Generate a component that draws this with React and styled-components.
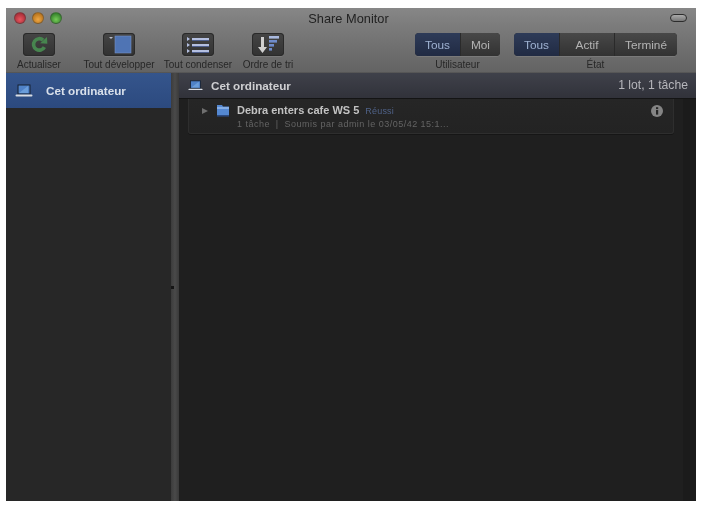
import React from 'react';
import styled, { createGlobalStyle } from 'styled-components';

const Global = createGlobalStyle`
  html, body { margin: 0; padding: 0; background: #fff; }
  #root { width: 701px; height: 506px; overflow: hidden; }
  * { box-sizing: border-box; }
`;
const Page = styled.div`
  width: 701px; height: 506px; padding: 8px 5px 5px 6px;
  font-family: "Liberation Sans", Arial, sans-serif;
  filter: blur(0.45px);
`;
const Win = styled.div`
  width: 690px; height: 493px; display: flex; flex-direction: column; overflow: hidden;
  background: #232323;
`;
const Chrome = styled.div`
  height: 65px; flex: none; display: flex; flex-direction: column;
  background: linear-gradient(#878787 0, #7a7a7a 20px, #636363 64px, #4a4a4a 65px);
`;
const TitleBar = styled.div`
  height: 20px; flex: none; display: grid; grid-template-columns: 1fr auto 1fr; align-items: center;
  padding: 0 9px 0 8px; color: #222;
`;
const Lights = styled.div`display: flex; gap: 6px;`;
const Light = styled.span`
  width: 12px; height: 12px; border-radius: 50%; border: 1px solid rgba(60,60,60,.45);
  background: radial-gradient(circle at 50% 65%, ${p => p.$hi} 0, ${p => p.$c} 75%);
`;
const Title = styled.div`font-size: 12.8px; margin-left: -4px;`;
const Pill = styled.span`
  justify-self: end; width: 17px; height: 8px; border-radius: 4px; border: 1px solid #2c2c2c;
  background: linear-gradient(#aaa, #777);
`;
const Toolbar = styled.div`display: flex; padding: 5px 0 0 11px; align-items: flex-start;`;
const Tool = styled.div`
  width: ${p => p.$w}px; margin-left: ${p => p.$ml || 0}px; flex: none;
  display: flex; flex-direction: column; align-items: center; gap: 3px;
`;
const ToolBtn = styled.div`
  width: 32px; height: 23px; border-radius: 4px; display: flex; align-items: center; justify-content: center;
  background: linear-gradient(#454545, #323232);
  box-shadow: inset 0 0 0 1px #2a2a2a, 0 1px 0 rgba(255,255,255,.1);
`;
const ToolLabel = styled.span`font-size: 10px; line-height: 11px; color: #272727; white-space: nowrap;`;
const SegGroup = styled.div`
  width: ${p => p.$w}px; margin-left: ${p => p.$ml}px; flex: none;
  display: flex; flex-direction: column; align-items: center; gap: 3px;
`;
const Seg = styled.div`
  width: 100%; height: 23px; display: flex; border-radius: 4px; overflow: hidden;
  box-shadow: inset 0 0 0 1px #2a2a2a, 0 1px 0 rgba(255,255,255,.1);
`;
const SegBtn = styled.div`
  width: ${p => p.$w}px; display: flex; align-items: center; justify-content: center; font-size: 11.8px;
  color: ${p => p.$on ? '#9fb2d2' : '#b4b4b4'};
  background: ${p => p.$on ? 'linear-gradient(#2e3b58, #212b43)' : 'linear-gradient(#484848, #323232)'};
  border-right: 1px solid #2a2a2a;
  &:last-child { border-right: 0; }
`;
const Body = styled.div`flex: 1; display: flex; min-height: 0;`;
const Sidebar = styled.div`width: 165px; flex: none; background: #272727;`;
const SideRow = styled.div`
  height: 35px; display: flex; align-items: center; gap: 13px; padding: 0 0 0 9px;
  background: linear-gradient(#35558c, #2c4a7f);
  color: #d9e0ea; font-size: 11.7px; font-weight: 700;
`;
const Splitter = styled.div`
  width: 8px; flex: none; display: flex; align-items: center; justify-content: center;
  background: linear-gradient(90deg, #3c3c3c, #4a4a4a 50%, #3a3a3a);
`;
const Grip = styled.span`width: 3px; height: 3px; margin-left: -6px; background: #151515;`;
const Main = styled.div`flex: 1; display: flex; flex-direction: column; background: #1f1f1f; min-width: 0;`;
const Header = styled.div`
  height: 26px; flex: none; display: flex; align-items: center; padding: 0 8px 1px 9px; gap: 8px;
  background: linear-gradient(#3f414a, #31323a);
  border-bottom: 1px solid #141414;
  color: #cfcfd2; font-size: 11.7px; font-weight: 700;
`;
const Count = styled.span`margin-left: auto; font-weight: 400; font-size: 12.2px; color: #b6b6bb;`;
const Content = styled.div`
  flex: 1; padding: 0 22px 0 9px; min-height: 0;
  background: linear-gradient(90deg, #1f1f1f 0, #1f1f1f 504px, #1b1b1b 504px);
`;
const Item = styled.div`
  height: 35px; display: flex; align-items: flex-start; padding: 5px 10px 0 13px;
  background: linear-gradient(#262626, #232323);
  border: solid #2e2e2e; border-width: 0 1px 1px 1px; border-radius: 0 0 3px 3px;
  box-shadow: 0 1px 0 #161616;
`;
const Arrow = styled.span`
  width: 0; height: 0; margin: 4px 8px 0 0; flex: none;
  border-left: 6px solid #6f6f6f; border-top: 3.5px solid transparent; border-bottom: 3.5px solid transparent;
`;
const ItemText = styled.div`margin-left: 7px; flex: 1; display: flex; flex-direction: column; gap: 2px;`;
const ItemTop = styled.div`display: flex; align-items: baseline; gap: 6px;`;
const ItemName = styled.span`font-size: 11px; line-height: 13px; font-weight: 700; color: #c2c2c2;`;
const Status = styled.span`font-size: 9px; color: #4f6288; letter-spacing: .2px;`;
const ItemSub = styled.span`font-size: 9px; line-height: 11px; color: #646464; letter-spacing: .48px; white-space: pre;`;

const Laptop = ({ w = 18 }) => (
  <svg width={w} height={w * 0.72} viewBox="0 0 18 13">
    <rect x="3" y="1" width="12" height="9" fill="#4f82c8" stroke="#16202f" strokeWidth="1" />
    <path d="M4 9 L13 2 V9 Z" fill="#7fb0e6" opacity=".6" />
    <rect x="0.5" y="10.5" width="17" height="2" rx="1" fill="#d9dde4" />
  </svg>
);

export default function App() {
  return (
    <Page>
      <Global />
      <Win>
        <Chrome>
          <TitleBar>
            <Lights>
              <Light $c="#a92e38" $hi="#e8565e" />
              <Light $c="#b8741c" $hi="#efa744" />
              <Light $c="#35822c" $hi="#76cc58" />
            </Lights>
            <Title>Share Monitor</Title>
            <Pill />
          </TitleBar>
          <Toolbar>
            <Tool $w={44}>
              <ToolBtn>
                <svg width="17" height="17" viewBox="0 0 16 16">
                  <path d="M12.6 10.4A5.4 5.4 0 1 1 11.4 3.9" fill="none" stroke="#47854f" strokeWidth="3.4" />
                  <path d="M8.6 6.8 L15 1 L15.4 7.4 Z" fill="#47854f" />
                </svg>
              </ToolBtn>
              <ToolLabel>Actualiser</ToolLabel>
            </Tool>
            <Tool $w={72} $ml={22}>
              <ToolBtn>
                <svg width="26" height="19" viewBox="0 0 26 19">
                  <rect x="9" y="1" width="16" height="17" fill="#4f74b4" stroke="#7690c4" strokeWidth=".6" />
                  <path d="M3 2 H7 L5 4 Z" fill="#b8bcc6" />
                </svg>
              </ToolBtn>
              <ToolLabel>Tout développer</ToolLabel>
            </Tool>
            <Tool $w={68} $ml={9}>
              <ToolBtn>
                <svg width="24" height="18" viewBox="0 0 24 18">
                  <g fill="#b4bfe0">
                    <rect x="6" y="2" width="17" height="2" />
                    <rect x="6" y="8" width="17" height="2" />
                    <rect x="6" y="14" width="17" height="2" />
                    <path d="M1 1 L4 3 L1 5 Z M1 7 L4 9 L1 11 Z M1 13 L4 15 L1 17 Z" />
                  </g>
                  <g fill="#4f5f8c">
                    <rect x="6" y="4" width="17" height="1" />
                    <rect x="6" y="10" width="17" height="1" />
                    <rect x="6" y="16" width="17" height="1" />
                  </g>
                </svg>
              </ToolBtn>
              <ToolLabel>Tout condenser</ToolLabel>
            </Tool>
            <Tool $w={52} $ml={10}>
              <ToolBtn>
                <svg width="24" height="19" viewBox="0 0 24 19">
                  <path d="M5 2 H8 V12 H11 L6.5 18 L2 12 H5 Z" fill="#d0d0d0" />
                  <g fill="#6f8ccb">
                    <rect x="13" y="1" width="10" height="2.6" fill="#a9b9de" />
                    <rect x="13" y="5" width="8" height="2.6" />
                    <rect x="13" y="9" width="5" height="2.6" />
                    <rect x="13" y="13" width="3" height="2.6" />
                  </g>
                </svg>
              </ToolBtn>
              <ToolLabel>Ordre de tri</ToolLabel>
            </Tool>
            <SegGroup $w={85} $ml={121}>
              <Seg>
                <SegBtn $w={46} $on>Tous</SegBtn>
                <SegBtn $w={39}>Moi</SegBtn>
              </Seg>
              <ToolLabel>Utilisateur</ToolLabel>
            </SegGroup>
            <SegGroup $w={163} $ml={14}>
              <Seg>
                <SegBtn $w={46} $on>Tous</SegBtn>
                <SegBtn $w={55}>Actif</SegBtn>
                <SegBtn $w={62}>Terminé</SegBtn>
              </Seg>
              <ToolLabel>État</ToolLabel>
            </SegGroup>
          </Toolbar>
        </Chrome>
        <Body>
          <Sidebar>
            <SideRow>
              <Laptop />
              <span>Cet ordinateur</span>
            </SideRow>
          </Sidebar>
          <Splitter><Grip /></Splitter>
          <Main>
            <Header>
              <Laptop w={15} />
              <span>Cet ordinateur</span>
              <Count>1 lot, 1 tâche</Count>
            </Header>
            <Content>
              <Item>
                <Arrow />
                <svg width="14" height="13" viewBox="0 0 14 13" style={{ flex: 'none' }}>
                  <path d="M1 1 H6 L7 2.5 H13 V12 H1 Z" fill="#5488d2" />
                  <rect x="1" y="3" width="12" height="2" fill="#86aee6" />
                  <rect x="1" y="11" width="12" height="1.6" fill="#2c4a80" />
                </svg>
                <ItemText>
                  <ItemTop>
                    <ItemName>Debra enters cafe WS 5</ItemName>
                    <Status>Réussi</Status>
                  </ItemTop>
                  <ItemSub>1 tâche  |  Soumis par admin le 03/05/42 15:1...</ItemSub>
                </ItemText>
                <svg width="12" height="12" viewBox="0 0 12 12" style={{ flex: 'none', marginTop: 1 }}>
                  <circle cx="6" cy="6" r="6" fill="#858585" />
                  <rect x="5" y="5" width="2.2" height="4.6" fill="#262626" />
                  <rect x="5" y="2.2" width="2.2" height="1.9" fill="#262626" />
                </svg>
              </Item>
            </Content>
          </Main>
        </Body>
      </Win>
    </Page>
  );
}
